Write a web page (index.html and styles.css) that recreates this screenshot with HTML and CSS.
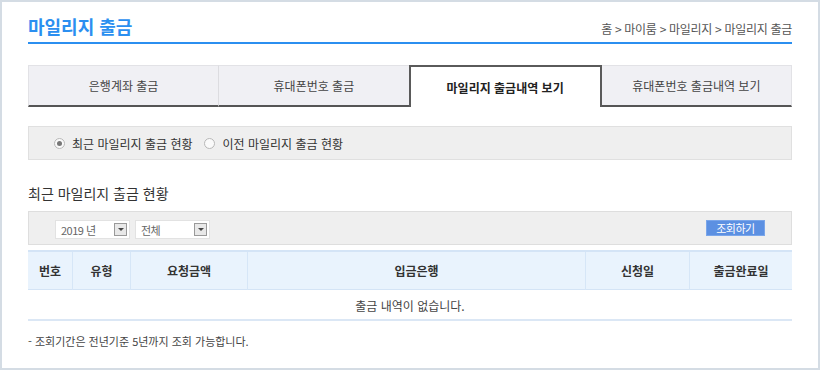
FILE: index.html
```html
<!DOCTYPE html>
<html lang="ko">
<head>
  <meta charset="UTF-8">
  <title>마일리지 출금</title>
  <link rel="stylesheet" href="styles.css">
</head>
<body>
  <div class="frame">
    <!-- Title -->
    <div class="page-head">
      <h1>마일리지 출금</h1>
      <div class="crumbs">홈 &gt; 마이룸 &gt; 마일리지 &gt; 마일리지 출금</div>
    </div>

    <!-- Tabs -->
    <ul class="tabs">
      <li>은행계좌 출금</li>
      <li>휴대폰번호 출금</li>
      <li class="active">마일리지 출금내역 보기</li>
      <li>휴대폰번호 출금내역 보기</li>
    </ul>

    <!-- Radio box -->
    <div class="radio-box">
      <label><span class="radio checked"></span>최근 마일리지 출금 현황</label>
      <label><span class="radio"></span>이전 마일리지 출금 현황</label>
    </div>

    <h2>최근 마일리지 출금 현황</h2>

    <!-- Filters -->
    <div class="filter-bar">
      <div class="selects">
        <div class="select"><span>2019 년</span><i class="arrow"></i></div>
        <div class="select"><span>전체</span><i class="arrow"></i></div>
      </div>
      <button class="search-btn">조회하기</button>
    </div>

    <!-- Table -->
    <table class="list">
      <thead>
        <tr>
          <th class="c-no">번호</th>
          <th class="c-type">유형</th>
          <th class="c-amount">요청금액</th>
          <th class="c-bank">입금은행</th>
          <th class="c-date">신청일</th>
          <th class="c-done">출금완료일</th>
        </tr>
      </thead>
      <tbody>
        <tr>
          <td colspan="6">출금 내역이 없습니다.</td>
        </tr>
      </tbody>
    </table>

    <p class="note">- 조회기간은 전년기준 5년까지 조회 가능합니다.</p>
  </div>
</body>
</html>
```

FILE: styles.css
```css
/* Base */
body {
  margin: 0;
  font-family: "Noto Sans CJK KR", "Noto Sans", sans-serif;
  font-size: 12px;
  color: #333;
  background: #fff;
}

.frame {
  width: 820px;
  height: 370px;
  box-sizing: border-box;
  border: 2px solid #d4dce4;
  padding: 0 26px;
  overflow: hidden;
}

/* Title */
.page-head {
  display: flex;
  justify-content: space-between;
  align-items: flex-end;
  height: 42px;
  border-bottom: 2px solid #2b8ff0;
  box-sizing: border-box;
  padding-bottom: 5px;
}

h1 {
  margin: 0;
  font-size: 18px;
  font-weight: bold;
  color: #2b8ff0;
  line-height: 22px;
}

.crumbs {
  font-size: 12px;
  color: #555;
  line-height: 14px;
  padding-bottom: 1px;
  letter-spacing: -0.3px;
}

/* Tabs */
.tabs {
  display: flex;
  list-style: none;
  margin: 21px 0 0;
  padding: 0;
  height: 42px;
}

.tabs li {
  flex: 1;
  display: flex;
  align-items: center;
  justify-content: center;
  background: #f0f0f4;
  border-top: 1px solid #e2e2e6;
  border-left: 1px solid #dcdce0;
  border-bottom: 2px solid #555;
  color: #444;
  font-size: 12px;
}

.tabs li:first-child {
  border-left: 1px solid #e2e2e6;
}

.tabs li.active {
  background: #fff;
  border: 2px solid #5a5a5a;
  border-bottom: none;
  color: #222;
  font-weight: bold;
}

.tabs li.active + li {
  border-left: none;
  border-right: 1px solid #e2e2e6;
}

/* Radio box */
.radio-box {
  display: flex;
  align-items: center;
  gap: 12px;
  margin-top: 19px;
  height: 34px;
  box-sizing: border-box;
  padding-left: 25px;
  background: #efefef;
  border: 1px solid #e0e0e0;
  font-size: 12px;
  color: #333;
}

.radio-box label {
  display: flex;
  align-items: center;
}

.radio {
  width: 9px;
  height: 9px;
  border: 1px solid #b8b8b8;
  border-radius: 50%;
  background: #fafafa;
  margin-right: 7px;
  position: relative;
}

.radio.checked::after {
  content: "";
  position: absolute;
  left: 2px;
  top: 2px;
  width: 5px;
  height: 5px;
  border-radius: 50%;
  background: #777;
}

h2 {
  margin: 24px 0 0;
  font-size: 14px;
  font-weight: normal;
  color: #333;
  line-height: 18px;
}

/* Filters */
.filter-bar {
  display: flex;
  justify-content: space-between;
  align-items: flex-start;
  margin-top: 9px;
  height: 34px;
  box-sizing: border-box;
  padding: 8px 26px 0 26px;
  background: #efefef;
  border: 1px solid #dedede;
}

.selects {
  display: flex;
  gap: 5px;
}

.select {
  display: flex;
  justify-content: space-between;
  align-items: center;
  width: 75px;
  height: 19px;
  box-sizing: border-box;
  padding: 0 2px 0 5px;
  background: #fff;
  border: 1px solid #e2e2e2;
  font-size: 11px;
  color: #666;
  letter-spacing: -0.5px;
}

.arrow {
  width: 13px;
  height: 13px;
  box-sizing: border-box;
  border: 1px solid #999;
  background: #e8e8e8;
  position: relative;
}

.arrow::after {
  content: "";
  position: absolute;
  left: 3px;
  top: 4px;
  border-left: 3px solid transparent;
  border-right: 3px solid transparent;
  border-top: 3px solid #444;
}

.search-btn {
  width: 59px;
  height: 16px;
  padding: 0;
  background: #5c90e2;
  border: 1px solid #7aa6ea;
  color: #fff;
  font-family: inherit;
  font-size: 11px;
  line-height: 14px;
  letter-spacing: -0.5px;
}

/* Table */
.list {
  width: 100%;
  margin-top: 5px;
  border-collapse: collapse;
  table-layout: fixed;
  border-top: 2px solid #d4e4f6;
}

.list th {
  height: 37px;
  padding: 0;
  background: #e9f3fd;
  border-left: 1px solid #d6e6f7;
  font-size: 12px;
  font-weight: bold;
  color: #333;
}

.list th:first-child {
  border-left: none;
}

.c-no { width: 44px; }
.c-type { width: 57px; }
.c-amount { width: 116px; }
.c-date { width: 103px; }
.c-done { width: 102px; }

.list td {
  height: 30px;
  padding: 3px 0 0;
  box-sizing: border-box;
  text-align: center;
  border-top: 1px solid #d4e4f6;
  border-bottom: 2px solid #dbe7f5;
  font-size: 12px;
  color: #444;
}

.note {
  margin: 13px 0 0;
  font-size: 11px;
  color: #444;
  line-height: 14px;
}
```
